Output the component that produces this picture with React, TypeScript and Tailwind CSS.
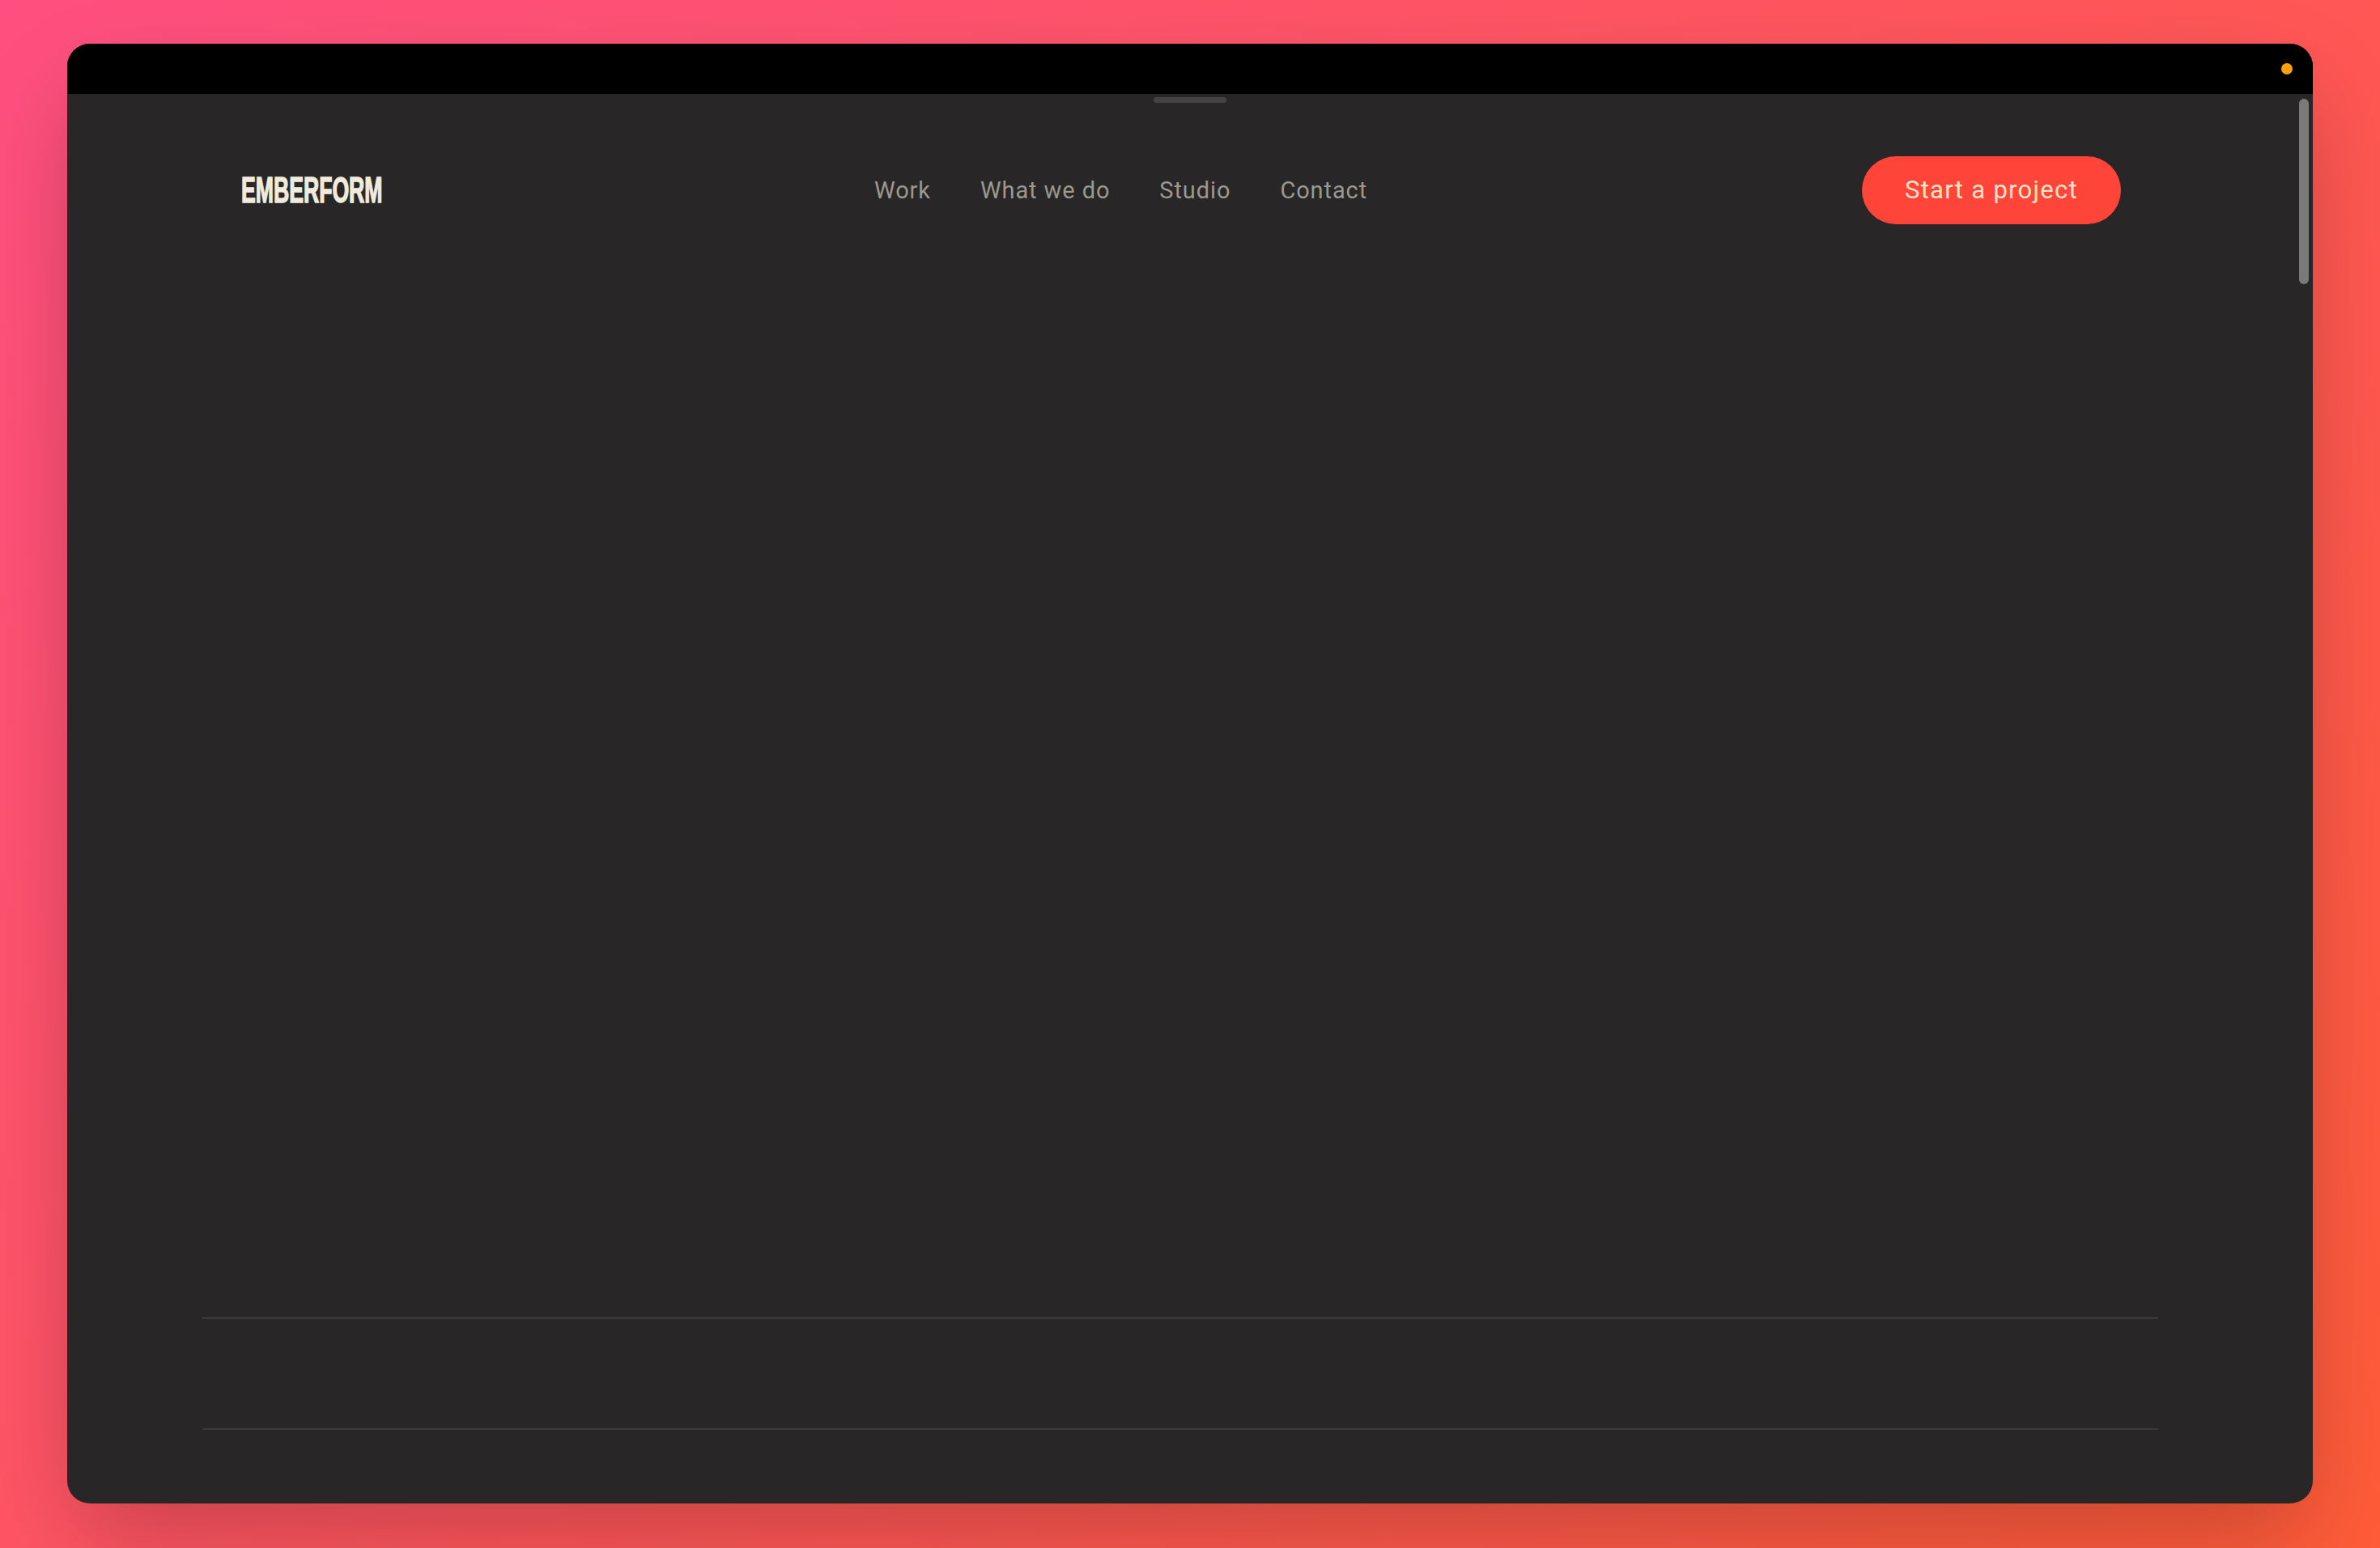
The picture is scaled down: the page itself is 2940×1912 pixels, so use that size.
export default function App() {
  const links = ["Work", "What we do", "Studio", "Contact"];
  return (
    <div className="h-[1912px] w-[2940px] overflow-hidden bg-[linear-gradient(135deg,#ff4f80_0%,#ff5560_45%,#ff5c38_100%)] px-[83px] pt-[54px]">
      <div className="relative flex h-[1803px] w-[2774px] flex-col overflow-hidden rounded-[28px] bg-[#282627] shadow-[0_50px_120px_-10px_rgba(0,0,0,0.22)]">
        <div className="flex h-[62px] shrink-0 items-center justify-end bg-black pr-[25px]">
          <span className="h-[14px] w-[14px] rounded-full bg-[#ff9f0a]" />
        </div>
        <div className="absolute left-[1342px] top-[66px] h-[7px] w-[90px] rounded-full bg-[#444444]" />
        <div className="absolute right-[5px] top-[68px] h-[229px] w-[12px] rounded-full bg-[#7a7a7b]" />
        <div className="flex min-h-0 flex-1 flex-col pl-[167px] pr-[191px]">
          <header className="mt-[77px] flex h-[84px] items-center justify-between pl-[48px] pr-[46px]">
            <span className="w-[174px] origin-left scale-x-[0.605] whitespace-nowrap font-['Liberation_Sans',sans-serif] text-[44px] font-bold leading-none tracking-normal text-[#f0ebdc] [-webkit-text-stroke:1.5px_#f0ebdc]">
              EMBERFORM
            </span>
            <nav className="mr-[3px] flex gap-[61px] pt-[2px] font-['Roboto',sans-serif] text-[29px] tracking-[0.9px] text-[#9b9890]">
              {links.map((l) => (
                <a key={l}>{l}</a>
              ))}
            </nav>
            <button className="h-[84px] w-[320px] rounded-full bg-[#ff453a] font-['Roboto',sans-serif] text-[31px] tracking-[1.3px] text-[#fde3c8]">
              Start a project
            </button>
          </header>
          <div className="mt-auto mb-[91px] h-[139px] border-y-2 border-[#3b3a3b]" />
        </div>
      </div>
    </div>
  );
}
